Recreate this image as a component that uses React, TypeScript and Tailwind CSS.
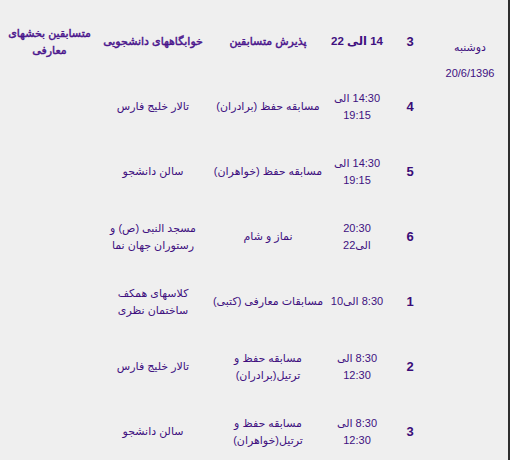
import React from "react";

type Row = {
  num: string;
  time: React.ReactNode;
  event: React.ReactNode;
  place: React.ReactNode;
  who?: React.ReactNode;
  bold?: boolean;
};

const rows: Row[] = [
  {
    num: "3",
    time: "14 الی 22",
    event: "پذیرش متسابقین",
    place: "خوابگاههای دانشجویی",
    who: (
      <>
        متسابقین بخشهای
        <br />
        معارفی
      </>
    ),
    bold: true,
  },
  {
    num: "4",
    time: (
      <>
        14:30 الی
        <br />
        19:15
      </>
    ),
    event: "مسابقه حفظ (برادران)",
    place: "تالار خلیج فارس",
  },
  {
    num: "5",
    time: (
      <>
        14:30 الی
        <br />
        19:15
      </>
    ),
    event: "مسابقه حفظ (خواهران)",
    place: "سالن دانشجو",
  },
  {
    num: "6",
    time: (
      <>
        20:30
        <br />
        الی22
      </>
    ),
    event: "نماز و شام",
    place: (
      <>
        مسجد النبی (ص) و
        <br />
        رستوران جهان نما
      </>
    ),
  },
  {
    num: "1",
    time: "8:30 الی10",
    event: "مسابقات معارفی (کتبی)",
    place: (
      <>
        کلاسهای همکف
        <br />
        ساختمان نظری
      </>
    ),
  },
  {
    num: "2",
    time: (
      <>
        8:30 الی
        <br />
        12:30
      </>
    ),
    event: (
      <>
        مسابقه حفظ و
        <br />
        ترتیل(برادران)
      </>
    ),
    place: "تالار خلیج فارس",
  },
  {
    num: "3",
    time: (
      <>
        8:30 الی
        <br />
        12:30
      </>
    ),
    event: (
      <>
        مسابقه حفظ و
        <br />
        ترتیل(خواهران)
      </>
    ),
    place: "سالن دانشجو",
  },
];

// header row uses a stroked regular face: DejaVu bold arabic runs too wide
const head = "[-webkit-text-stroke:0.45px_#4a148c] text-[#4a148c]";

export default function App() {
  return (
    <div
      className="w-[510px] h-[460px] overflow-hidden bg-[#efefef] border-r-2 border-[#2e2e2e] text-[11px] leading-[17px] text-[#40107f]"
      style={{ fontFamily: '"Liberation Sans", "DejaVu Sans", sans-serif' }}
    >
      <div dir="rtl" className="w-[505px] pt-[9px] flex">
        <div className="w-[70px] shrink-0 flex flex-col items-center pt-[30px]">
          <div>دوشنبه</div>
          <div className="mt-[9px]">20/6/1396</div>
        </div>
        <div className="flex-1 flex flex-col">
          {rows.map((r, i) => (
            <div key={i} className="h-[65px] flex items-center whitespace-nowrap">
              <div className="w-[50px] shrink-0 text-center font-bold text-[13px] text-[#3a0c78]">{r.num}</div>
              <div className={`w-[56px] shrink-0 flex justify-center ${r.bold ? "font-bold text-[11.5px]" : ""}`}>
                <div className="text-center">{r.time}</div>
              </div>
              <div className={`w-[122px] shrink-0 flex justify-center ${r.bold ? head : ""}`}>
                <div className="text-center">{r.event}</div>
              </div>
              <div className={`w-[108px] shrink-0 flex justify-center ${r.bold ? head : ""}`}>
                <div className="text-center">{r.place}</div>
              </div>
              <div className={`w-[99px] shrink-0 flex justify-center ${r.bold ? head : ""}`}>
                <div className="text-center">{r.who}</div>
              </div>
            </div>
          ))}
        </div>
      </div>
    </div>
  );
}
